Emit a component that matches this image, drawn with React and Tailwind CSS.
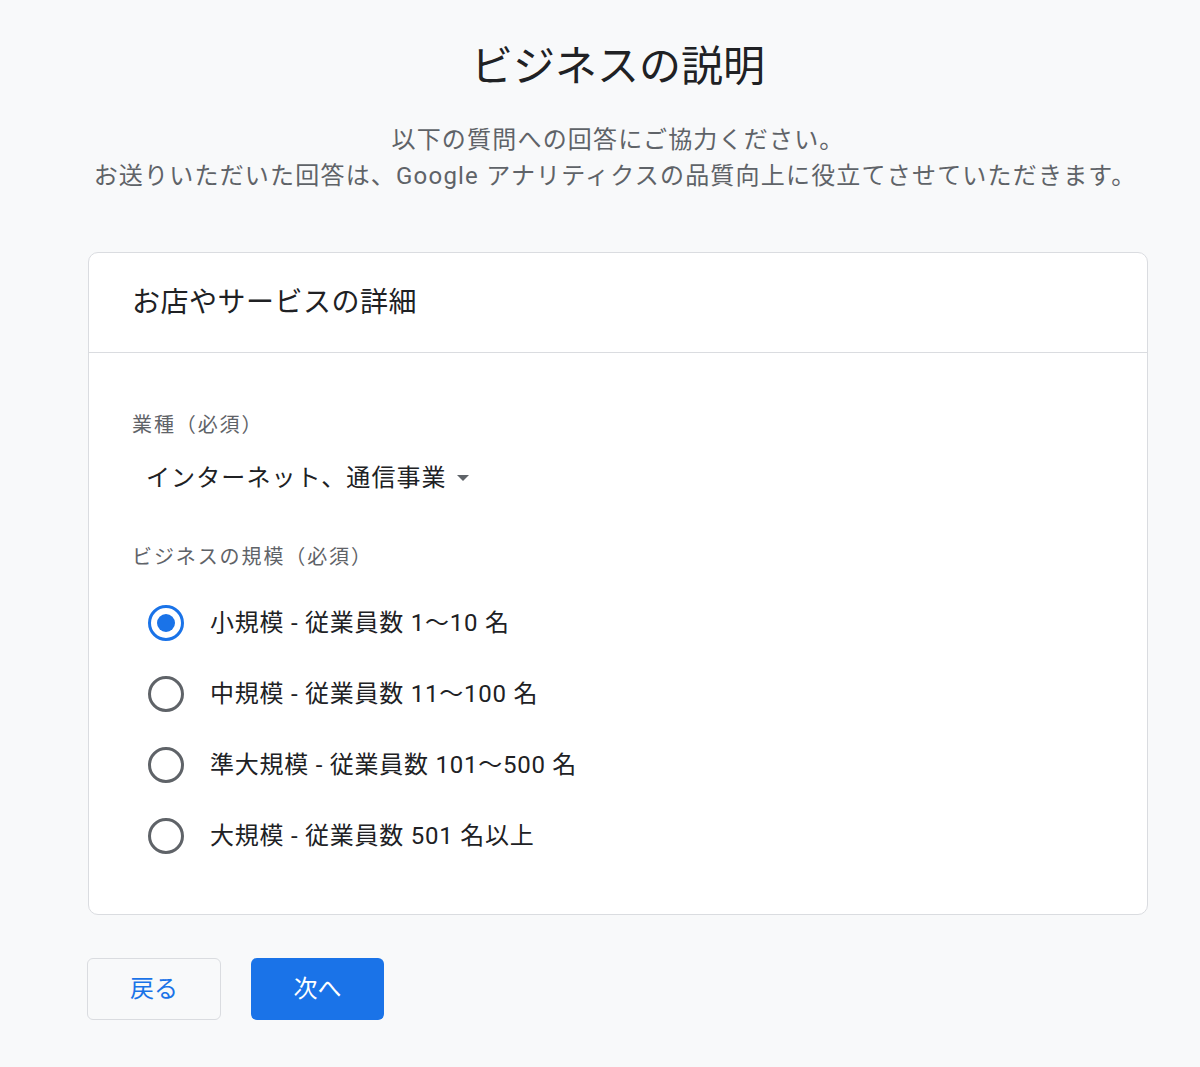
export default function App() {
  const options = [
    "小規模 - 従業員数 1〜10 名",
    "中規模 - 従業員数 11〜100 名",
    "準大規模 - 従業員数 101〜500 名",
    "大規模 - 従業員数 501 名以上",
  ];
  return (
    <div
      className="min-h-[1067px] w-full bg-[#f8f9fa] pl-[88px] pr-[52px]"
      style={{ fontFamily: '"Roboto", "Noto Sans CJK JP", sans-serif' }}
    >
      <h1 className="pt-[42px] text-center text-[42px] leading-[50px] font-normal text-[#202124]">
        ビジネスの説明
      </h1>
      <div className="mt-[30px] text-center text-[24px] leading-[36px] tracking-[1.2px] text-[#5f6368]">
        <p>以下の質問への回答にご協力ください。</p>
        <p className="whitespace-nowrap -mx-[40px] -translate-x-[3px]">
          お送りいただいた回答は、Google アナリティクスの品質向上に役立てさせていただきます。
        </p>
      </div>
      <div className="mt-[58px] rounded-[10px] border border-[#dadce0] bg-white">
        <div className="flex h-[100px] items-center border-b border-[#dadce0] px-[43px] text-[28px] tracking-[0.5px] text-[#202124]">
          お店やサービスの詳細
        </div>
        <div className="px-[43px] pt-[58px] pb-[43px]">
          <div className="text-[20px] leading-[28px] tracking-[1.9px] text-[#5f6368]">業種（必須）</div>
          <div className="mt-[21px] flex items-center pl-[14px] text-[24px] leading-[36px] tracking-[1.1px] text-[#202124]">
            <span>インターネット、通信事業</span>
            <svg className="ml-[10px]" width="12" height="6" viewBox="0 0 12 6">
              <path d="M0 0 L12 0 L6 6 Z" fill="#5f6368" />
            </svg>
          </div>
          <div className="mt-[47px] text-[20px] leading-[28px] tracking-[1.9px] text-[#5f6368]">
            ビジネスの規模（必須）
          </div>
          <div className="mt-[16px] flex flex-col">
            {options.map((o, i) => (
              <div key={i} className="flex h-[71px] items-center pl-[16px]">
                {i === 0 ? (
                  <span className="flex h-[36px] w-[36px] items-center justify-center rounded-full border-[3px] border-[#1a73e8]">
                    <span className="h-[18px] w-[18px] rounded-full bg-[#1a73e8]" />
                  </span>
                ) : (
                  <span className="h-[36px] w-[36px] rounded-full border-[3px] border-[#5f6368]" />
                )}
                <span className="ml-[26px] text-[24px] tracking-[0.75px] text-[#202124]">{o}</span>
              </div>
            ))}
          </div>
        </div>
      </div>
      <div className="mt-[43px] -ml-[1px] flex gap-[30px] pb-[46px]">
        <button className="flex h-[62px] w-[134px] items-center justify-center rounded-[6px] border border-[#dadce0] bg-[#f8f9fa] text-[24px] text-[#1a73e8]">
          戻る
        </button>
        <button className="flex h-[62px] w-[133px] items-center justify-center rounded-[6px] bg-[#1a73e8] text-[24px] text-white">
          次へ
        </button>
      </div>
    </div>
  );
}
